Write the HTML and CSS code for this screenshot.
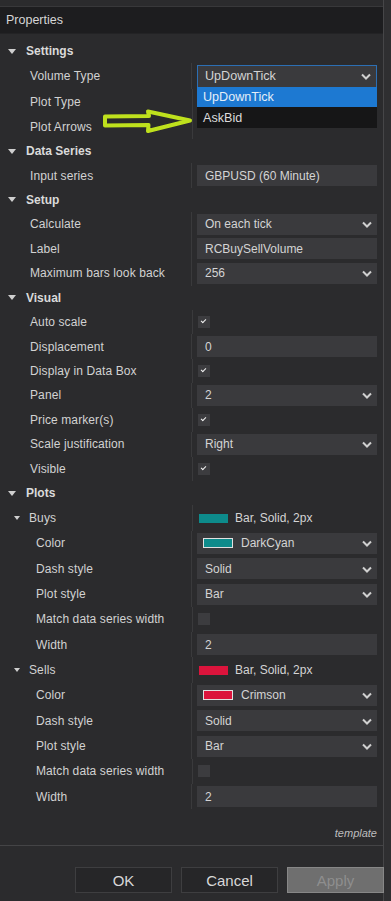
FILE: index.html
```html
<!DOCTYPE html>
<html lang="en">
<head>
    <meta charset="UTF-8">
    <meta name="viewport" content="width=device-width, initial-scale=1.0">
    <title>Properties</title>
    <link rel="stylesheet" href="styles.css">
</head>
<body>
    <div class="window">
        <div class="titlebar">Properties</div>

        <div class="panel">
            <div class="grid">
                <div class="row head"><span class="tri"></span>Settings</div>
                <div class="row tall">
                    <div class="label">Volume Type</div>
                    <div class="value">
                        <div class="editor select open">UpDownTick<svg class="chev" viewBox="0 0 10 7"><polyline points="1,1.5 5,5.5 9,1.5"/></svg></div>
                        <div class="dropdown">
                            <div class="option active">UpDownTick</div>
                            <div class="option">AskBid</div>
                        </div>
                    </div>
                </div>
                <div class="row tall"><div class="label">Plot Type</div><div class="value"></div></div>
                <div class="row"><div class="label">Plot Arrows</div><div class="value"></div></div>

                <div class="row head"><span class="tri"></span>Data Series</div>
                <div class="row"><div class="label">Input series</div><div class="value"><div class="editor">GBPUSD (60 Minute)</div></div></div>

                <div class="row head"><span class="tri"></span>Setup</div>
                <div class="row"><div class="label">Calculate</div><div class="value"><div class="editor select">On each tick<svg class="chev" viewBox="0 0 10 7"><polyline points="1,1.5 5,5.5 9,1.5"/></svg></div></div></div>
                <div class="row"><div class="label">Label</div><div class="value"><div class="editor">RCBuySellVolume</div></div></div>
                <div class="row"><div class="label">Maximum bars look back</div><div class="value"><div class="editor select">256<svg class="chev" viewBox="0 0 10 7"><polyline points="1,1.5 5,5.5 9,1.5"/></svg></div></div></div>

                <div class="row head"><span class="tri"></span>Visual</div>
                <div class="row"><div class="label">Auto scale</div><div class="value"><span class="check on"></span></div></div>
                <div class="row"><div class="label">Displacement</div><div class="value"><div class="editor">0</div></div></div>
                <div class="row"><div class="label">Display in Data Box</div><div class="value"><span class="check on"></span></div></div>
                <div class="row"><div class="label">Panel</div><div class="value"><div class="editor select">2<svg class="chev" viewBox="0 0 10 7"><polyline points="1,1.5 5,5.5 9,1.5"/></svg></div></div></div>
                <div class="row"><div class="label">Price marker(s)</div><div class="value"><span class="check on"></span></div></div>
                <div class="row"><div class="label">Scale justification</div><div class="value"><div class="editor select">Right<svg class="chev" viewBox="0 0 10 7"><polyline points="1,1.5 5,5.5 9,1.5"/></svg></div></div></div>
                <div class="row"><div class="label">Visible</div><div class="value"><span class="check on"></span></div></div>

                <div class="row head"><span class="tri"></span>Plots</div>
                <div class="plots">
                    <div class="row"><div class="label sub"><span class="tri small"></span>Buys</div><div class="value"><span class="swatch cyan"></span><span class="summary">Bar, Solid, 2px</span></div></div>
                    <div class="row"><div class="label deep">Color</div><div class="value"><div class="editor select"><span class="swatch framed cyan"></span>DarkCyan<svg class="chev" viewBox="0 0 10 7"><polyline points="1,1.5 5,5.5 9,1.5"/></svg></div></div></div>
                    <div class="row"><div class="label deep">Dash style</div><div class="value"><div class="editor select">Solid<svg class="chev" viewBox="0 0 10 7"><polyline points="1,1.5 5,5.5 9,1.5"/></svg></div></div></div>
                    <div class="row"><div class="label deep">Plot style</div><div class="value"><div class="editor select">Bar<svg class="chev" viewBox="0 0 10 7"><polyline points="1,1.5 5,5.5 9,1.5"/></svg></div></div></div>
                    <div class="row"><div class="label deep">Match data series width</div><div class="value"><span class="check"></span></div></div>
                    <div class="row"><div class="label deep">Width</div><div class="value"><div class="editor">2</div></div></div>

                    <div class="row"><div class="label sub"><span class="tri small"></span>Sells</div><div class="value"><span class="swatch crimson"></span><span class="summary">Bar, Solid, 2px</span></div></div>
                    <div class="row"><div class="label deep">Color</div><div class="value"><div class="editor select"><span class="swatch framed crimson"></span>Crimson<svg class="chev" viewBox="0 0 10 7"><polyline points="1,1.5 5,5.5 9,1.5"/></svg></div></div></div>
                    <div class="row"><div class="label deep">Dash style</div><div class="value"><div class="editor select">Solid<svg class="chev" viewBox="0 0 10 7"><polyline points="1,1.5 5,5.5 9,1.5"/></svg></div></div></div>
                    <div class="row"><div class="label deep">Plot style</div><div class="value"><div class="editor select">Bar<svg class="chev" viewBox="0 0 10 7"><polyline points="1,1.5 5,5.5 9,1.5"/></svg></div></div></div>
                    <div class="row"><div class="label deep">Match data series width</div><div class="value"><span class="check"></span></div></div>
                    <div class="row"><div class="label deep">Width</div><div class="value"><div class="editor">2</div></div></div>
                </div>
            </div>
            <div class="footer">template</div>

            <!-- hand drawn annotation arrow -->
            <svg class="arrow" viewBox="0 0 92 26">
                <path d="M3,7.5 L47,7 L46,2.5 L88,11.5 L46,22 L46.5,16 L3,16.5 Z"/>
            </svg>
        </div>

        <div class="buttons">
            <button class="btn">OK</button>
            <button class="btn">Cancel</button>
            <button class="btn disabled">Apply</button>
        </div>
    </div>
</body>
</html>
```

FILE: styles.css
```css
body {
    margin: 0;
    background: #2f2f31;
    font-family: "Liberation Sans", Arial, sans-serif;
    font-size: 12px;
    color: #d2d2d2;
}
.window {
    width: 384px;
    height: 901px;
    padding-top: 6px;
    box-sizing: border-box;
    background: #2b2b2d;
    border-right: 1px solid #464648;
}
.titlebar {
    height: 27px;
    line-height: 27px;
    padding-left: 6px;
    background: #1d1d1f;
    border-top: 1px solid #38383a;
    box-sizing: border-box;
    color: #d6d6d6;
    font-size: 12.5px;
}
.panel {
    position: relative;
    border-bottom: 1px solid #444446;
}
.grid {
    padding-top: 5px;
    border-top: 1px solid #232325;
}
.row {
    display: flex;
    height: 24.44px;
    align-items: stretch;
}
.row.tall {
    height: 25.5px;
}
.plots .row {
    height: 25.33px;
}
.row.head {
    align-items: center;
    padding-left: 8px;
    font-weight: bold;
    color: #dadada;
}
.tri {
    display: inline-block;
    width: 0;
    height: 0;
    border-left: 4px solid transparent;
    border-right: 4px solid transparent;
    border-top: 5px solid #cfcfcf;
    margin-right: 10px;
}
.tri.small {
    border-left-width: 3.5px;
    border-right-width: 3.5px;
    border-top-width: 4px;
    margin-right: 9px;
}
.label {
    width: 192px;
    padding-left: 30px;
    box-sizing: border-box;
    display: flex;
    align-items: center;
    letter-spacing: 0.1px;
    white-space: nowrap;
}
.label.sub {
    padding-left: 14px;
}
.label.deep {
    padding-left: 36px;
}
.value {
    position: relative;
    flex: 1;
    border-left: 1px solid #3a3a3c;
    padding: 0 6px 0 5px;
    display: flex;
    align-items: center;
}
.editor {
    position: relative;
    width: 180px;
    height: 21px;
    box-sizing: border-box;
    background: #3a3a3d;
    padding-left: 8px;
    display: flex;
    align-items: center;
    color: #d4d4d4;
}
.select.open {
    border: 1px solid #2c6fb4;
    height: 23px;
    padding-left: 7px;
    font-size: 12.6px;
}
.chev {
    position: absolute;
    right: 5px;
    top: 50%;
    width: 10px;
    height: 7px;
    margin-top: -3px;
}
.chev polyline {
    fill: none;
    stroke: #d0d0d0;
    stroke-width: 2;
}
.dropdown {
    position: absolute;
    left: 5px;
    top: 24px;
    width: 180px;
    z-index: 2;
    background: #161617;
    font-size: 12.6px;
}
.option {
    height: 20px;
    line-height: 20px;
    padding-left: 6px;
    color: #dcdcdc;
}
.option.active {
    background: #1d79d2;
    color: #e4eef8;
    margin-bottom: 1px;
}
.check {
    width: 12px;
    height: 12px;
    background: #3c3c3f;
    position: relative;
}
.check.on::after {
    content: "";
    position: absolute;
    left: 3px;
    top: 3px;
    width: 4px;
    height: 2px;
    border-left: 1.5px solid #f2f2f2;
    border-bottom: 1.5px solid #f2f2f2;
    transform: rotate(-45deg);
}
.swatch {
    display: inline-block;
    width: 29px;
    height: 9px;
    margin-left: 1px;
    margin-right: 7px;
}
.swatch.framed {
    width: 28px;
    height: 8px;
    margin-left: -2px;
    margin-right: 8px;
    border: 1px solid #e0e0e0;
}
.cyan {
    background: #0d8b8b;
}
.crimson {
    background: #dc143c;
}
.summary {
    color: #d4d4d4;
}
.footer {
    height: 36px;
    box-sizing: border-box;
    padding: 17px 6px 0 0;
    line-height: 14px;
    text-align: right;
    font-style: italic;
    font-size: 11px;
    color: #bdbdbd;
}
.arrow {
    position: absolute;
    left: 102px;
    top: 76px;
    width: 92px;
    height: 26px;
    z-index: 3;
}
.arrow path {
    fill: #2a2a2a;
    stroke: #bfe11d;
    stroke-width: 4;
    stroke-linejoin: round;
}
.buttons {
    display: flex;
    justify-content: flex-end;
    gap: 9px;
    padding-top: 21px;
    margin-right: -1px;
}
.btn {
    width: 97px;
    height: 26px;
    background: #262628;
    border: 1px solid #3e3e40;
    color: #d8d8d8;
    font-family: "Liberation Sans", Arial, sans-serif;
    font-size: 15px;
    padding: 0;
}
.btn.disabled {
    background: #6f6f6f;
    border-color: #878787;
    color: #8e8e8e;
}
```
